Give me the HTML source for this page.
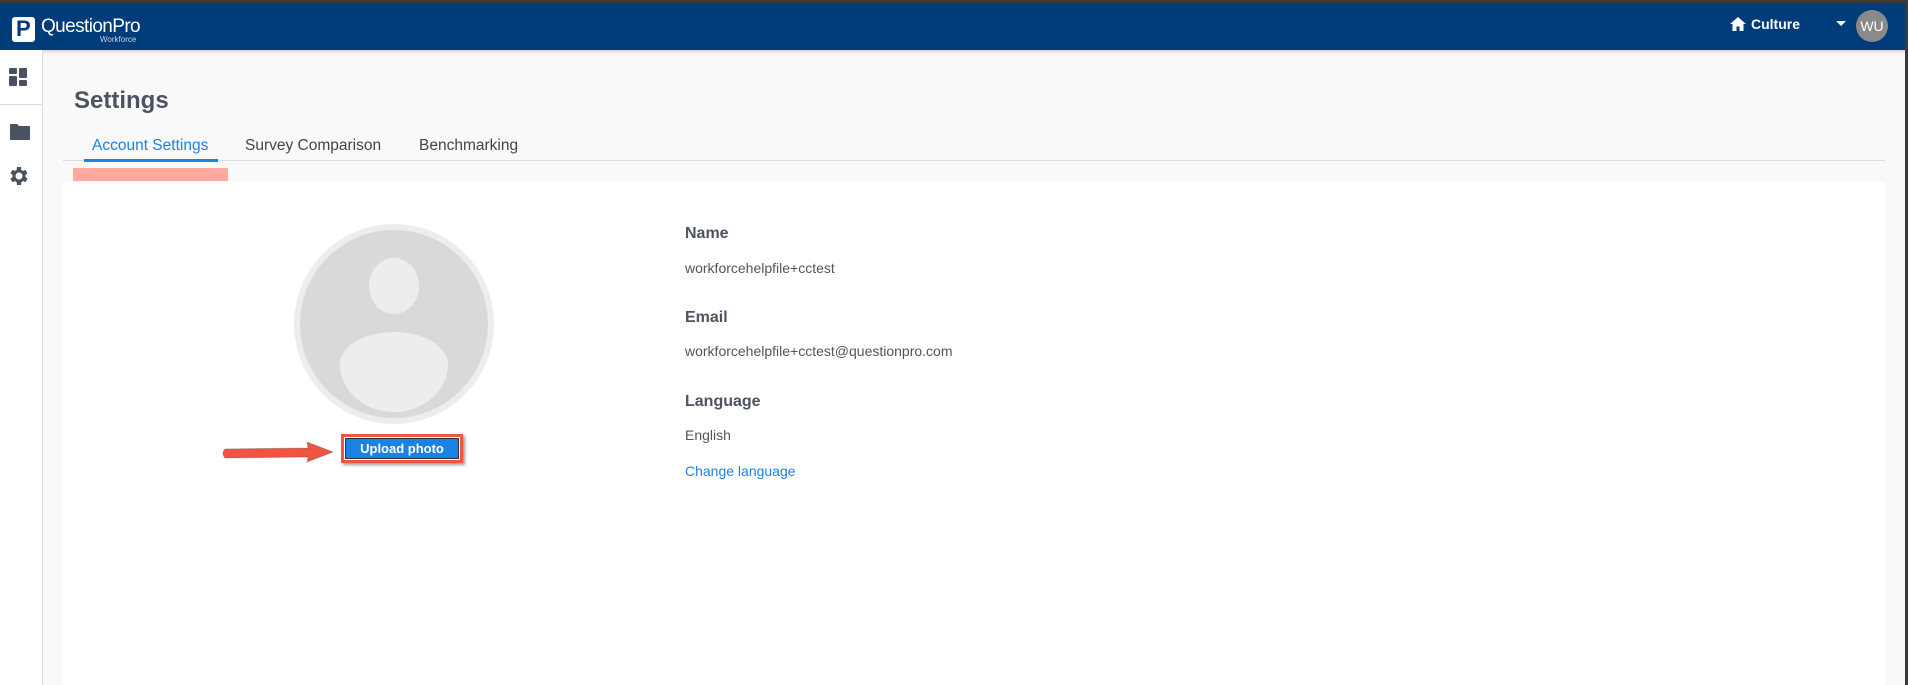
<!DOCTYPE html>
<html><head><meta charset="utf-8"><style>
*{margin:0;padding:0;box-sizing:border-box}
body{width:1908px;height:685px;overflow:hidden;background:#f9f9f9;font-family:"Liberation Sans",sans-serif;position:relative}
.a{position:absolute}
</style></head><body>
<div class="a" style="left:0;top:0;width:1908px;height:3px;background:#3a3a3a"></div>
<div class="a" style="right:0;top:0;width:3px;height:685px;background:#3a3a3a;z-index:5"></div>
<div class="a" style="left:0;top:3px;width:1908px;height:47px;background:#003b7a;box-shadow:0 2px 3px rgba(0,0,0,.15)"></div>
<div class="a" style="left:12px;top:17px;width:23px;height:25px;background:#fff;border-radius:3px"></div>
<div class="a" style="left:16px;top:16px;color:#003b7a;font-weight:bold;font-size:22px">P</div>
<div class="a" style="left:41px;top:16px;color:#fff;font-size:19px;letter-spacing:-0.6px;font-weight:300">QuestionPro</div>
<div class="a" style="left:100px;top:35px;color:#c8d4e6;font-size:8px">Workforce</div>
<svg class="a" style="left:1729px;top:16px" width="18" height="16" viewBox="0 0 18 16"><path d="M9 1 L1 8 H3.5 V15 H7.5 V10.5 H10.5 V15 H14.5 V8 H17Z" fill="#fff"/></svg>
<div class="a" style="left:1751px;top:16px;color:#fff;font-weight:bold;font-size:14px">Culture</div>
<svg class="a" style="left:1836px;top:21px" width="10" height="6"><path d="M0 0H10L5 5Z" fill="#fff"/></svg>
<div class="a" style="left:1856px;top:10px;width:32px;height:32px;border-radius:50%;background:#8a8a8a;color:#fff;font-size:14px;text-align:center;line-height:32px">WU</div>
<div class="a" style="left:0;top:50px;width:43px;height:635px;background:#fff;border-right:1px solid #ddd"></div>
<div class="a" style="left:0;top:104px;width:43px;height:1px;background:#ddd"></div>
<svg class="a" style="left:9px;top:68px" width="19" height="19"><rect x="0" y="0" width="8" height="6" rx="1" fill="#4a5262"/><rect x="0" y="8" width="8" height="10" rx="1" fill="#4a5262"/><rect x="10" y="0" width="8" height="10" rx="1" fill="#4a5262"/><rect x="10" y="12" width="8" height="6" rx="1" fill="#4a5262"/></svg>
<svg class="a" style="left:10px;top:124px" width="20" height="16"><path d="M0 1Q0 0 1 0H7L9 2H19Q20 2 20 3V15Q20 16 19 16H1Q0 16 0 15Z" fill="#4a5262"/></svg>
<svg class="a" style="left:7px;top:164px" width="24" height="24" viewBox="0 0 24 24"><path fill="#4a5262" d="M19.4 13a7.8 7.8 0 0 0 0-2l2.1-1.6-2-3.5-2.5 1a7.3 7.3 0 0 0-1.7-1L15 3h-4l-.4 2.9a7.3 7.3 0 0 0-1.7 1l-2.5-1-2 3.5L6.6 11a7.8 7.8 0 0 0 0 2l-2.2 1.6 2 3.5 2.5-1a7.3 7.3 0 0 0 1.7 1L11 21h4l.4-2.9a7.3 7.3 0 0 0 1.7-1l2.5 1 2-3.5zM13 15.5a3.5 3.5 0 1 1 0-7 3.5 3.5 0 0 1 0 7z" transform="translate(-1 0)"/></svg>
<div class="a" style="left:74px;top:87px;color:#4d5360;font-weight:bold;font-size:24px">Settings</div>
<div class="a" style="left:92px;top:137px;color:#1a82e2;font-size:15.5px">Account Settings</div>
<div class="a" style="left:245px;top:137px;color:#444;font-size:15.5px">Survey Comparison</div>
<div class="a" style="left:419px;top:137px;color:#444;font-size:15.5px">Benchmarking</div>
<div class="a" style="left:63px;top:160px;width:1822px;height:1px;background:#ddd"></div>
<div class="a" style="left:84px;top:159px;width:134px;height:3px;background:#1a82e2"></div>
<div class="a" style="left:73px;top:168px;width:155px;height:13px;background:#fea89e"></div>
<div class="a" style="left:63px;top:182px;width:1822px;height:503px;background:#fff"></div>
<div class="a" style="left:294px;top:224px;width:200px;height:200px;border-radius:50%;background:#ededed"></div>
<div class="a" style="left:300px;top:230px;width:188px;height:188px;border-radius:50%;background:#d9d9d9;overflow:hidden">
<div class="a" style="left:69px;top:28px;width:50px;height:56px;border-radius:50%;background:#ededed"></div>
<div class="a" style="left:40px;top:102px;width:108px;height:80px;border-radius:50% 50% 50% 50%/40% 40% 60% 60%;background:#ededed"></div>
</div>
<svg class="a" style="left:220px;top:441px" width="122" height="24"><path d="M5 8 L88 7 L87 1 L113 11 L87 21 L88 16 L5 17 Q1 12.5 5 8Z" fill="#f05543" stroke="#444" stroke-opacity=".3"/></svg>
<div class="a" style="left:341px;top:434px;width:122px;height:29px;border:3px solid #f05543;box-shadow:2px 2px 3px rgba(0,0,0,.4)"><div style="margin:1px;height:21px;background:#1a82e2;border:1px solid #333;color:#fff;font-weight:bold;font-size:13px;text-align:center;line-height:19px">Upload photo</div></div>
<div class="a" style="left:685px;top:225px;color:#4d5360;font-weight:bold;font-size:16px">Name</div>
<div class="a" style="left:685px;top:260px;color:#555;font-size:14px">workforcehelpfile+cctest</div>
<div class="a" style="left:685px;top:309px;color:#4d5360;font-weight:bold;font-size:16px">Email</div>
<div class="a" style="left:685px;top:343px;color:#555;font-size:14px">workforcehelpfile+cctest@questionpro.com</div>
<div class="a" style="left:685px;top:393px;color:#4d5360;font-weight:bold;font-size:16px">Language</div>
<div class="a" style="left:685px;top:427px;color:#555;font-size:14px">English</div>
<div class="a" style="left:685px;top:463px;color:#1a82e2;font-size:14px">Change language</div>
</body></html>
